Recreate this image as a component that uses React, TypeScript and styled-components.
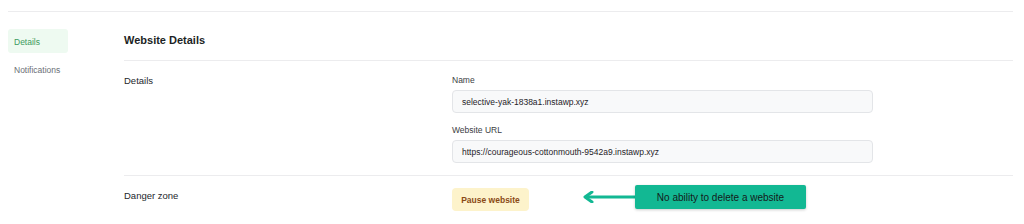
import React from "react";
import styled, { createGlobalStyle } from "styled-components";

const Global = createGlobalStyle`
  html, body { margin: 0; padding: 0; background: #ffffff; }
  body { font-family: "Liberation Sans", Arial, Helvetica, sans-serif; color: #1f2328; }
  * { box-sizing: border-box; }
`;

const Page = styled.div`
  padding: 0 11px 0 8px;
`;

const TopBar = styled.div`
  height: 12px;
  border-bottom: 1px solid #ececee;
`;

const Layout = styled.div`
  display: flex;
`;

const Sidebar = styled.nav`
  width: 116px;
  flex-shrink: 0;
  padding-top: 17px;
  display: flex;
  flex-direction: column;
  gap: 5px;
`;

const NavItem = styled.div<{ $active?: boolean }>`
  width: 60px;
  height: 24px;
  padding: ${(p) => (p.$active ? "2px 6px 0" : "0 6px")};
  display: flex;
  align-items: center;
  font-size: 8.5px;
  border-radius: 3px;
  color: ${(p) => (p.$active ? "#3c9a60" : "#6b6f76")};
  background: ${(p) => (p.$active ? "#eefaf1" : "transparent")};
`;

const Main = styled.main`
  flex: 1;
`;

const Title = styled.h1`
  margin: 0;
  height: 49px;
  padding-top: 21px;
  font-size: 11px;
  line-height: 14px;
  font-weight: 700;
  color: #1c1f24;
  border-bottom: 1px solid #ececee;
`;

const Section = styled.section<{ $last?: boolean }>`
  display: flex;
  padding: ${(p) => (p.$last ? "12px 0 12px" : "13px 0 12px")};
  border-bottom: ${(p) => (p.$last ? "none" : "1px solid #ececee")};
`;

const SectionLabel = styled.div<{ $offset: number }>`
  width: 328px;
  flex-shrink: 0;
  font-size: 9.5px;
  line-height: 12px;
  color: #24272c;
  padding-top: ${(p) => p.$offset}px;
`;

const Fields = styled.div`
  width: 421px;
  display: flex;
  flex-direction: column;
`;

const FieldLabel = styled.label`
  font-size: 8.5px;
  line-height: 12px;
  color: #3a3d42;
  margin-bottom: 4px;
`;

const Input = styled.div<{ $gap?: boolean }>`
  height: 23px;
  border: 1px solid #e3e5e8;
  border-radius: 4px;
  background: #f8f9fa;
  padding: 0 9px;
  display: flex;
  align-items: center;
  font-size: 8.5px;
  color: #1f2328;
  margin-bottom: ${(p) => (p.$gap ? "11px" : "0")};
`;

const DangerRow = styled.div`
  display: flex;
  align-items: center;
`;

const PauseButton = styled.button`
  width: 77px;
  height: 23px;
  border: none;
  border-radius: 4px;
  background: #fdf3cb;
  color: #8a4a16;
  font-family: inherit;
  font-size: 8.5px;
  font-weight: 700;
  padding: 0;
`;

const Annotation = styled.div`
  display: flex;
  align-items: center;
  margin-left: 54px;
  margin-top: -5px;
`;

const Callout = styled.div`
  width: 171px;
  height: 24px;
  background: #12b893;
  border-radius: 2px;
  box-shadow: 0 1px 3px rgba(0, 0, 0, 0.2);
  display: flex;
  align-items: center;
  justify-content: center;
  font-size: 10px;
  color: #141a1a;
`;

export default function App() {
  return (
    <Page>
      <Global />
      <TopBar />
      <Layout>
        <Sidebar>
          <NavItem $active>Details</NavItem>
          <NavItem>Notifications</NavItem>
        </Sidebar>
        <Main>
          <Title>Website Details</Title>
          <Section>
            <SectionLabel $offset={1}>Details</SectionLabel>
            <Fields>
              <FieldLabel>Name</FieldLabel>
              <Input $gap>selective-yak-1838a1.instawp.xyz</Input>
              <FieldLabel>Website URL</FieldLabel>
              <Input>https://courageous-cottonmouth-9542a9.instawp.xyz</Input>
            </Fields>
          </Section>
          <Section $last>
            <SectionLabel $offset={2}>Danger zone</SectionLabel>
            <DangerRow>
              <PauseButton>Pause website</PauseButton>
              <Annotation>
                <svg width="52" height="12" viewBox="0 0 52 12">
                  <line x1="3" y1="6" x2="52" y2="6" stroke="#12b893" strokeWidth="3" />
                  <path d="M9 1 L2 6 L9 11" fill="none" stroke="#12b893" strokeWidth="3" strokeLinejoin="round" strokeLinecap="round" />
                </svg>
                <Callout>No ability to delete a website</Callout>
              </Annotation>
            </DangerRow>
          </Section>
        </Main>
      </Layout>
    </Page>
  );
}
